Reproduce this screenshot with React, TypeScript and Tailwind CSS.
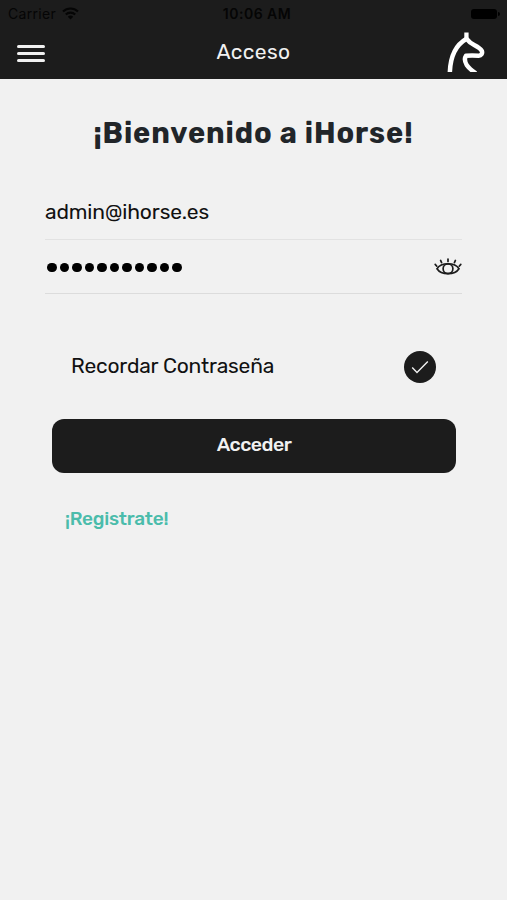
import React, { useState } from 'react';

const PASSWORD_LENGTH = 11;

function WifiIcon() {
  return (
    <svg width="17" height="13" viewBox="0 0 17 13" fill="none" stroke="#050505" strokeWidth="2.1">
      <path d="M1 4.6a10.6 10.6 0 0 1 15 0" />
      <path d="M3.8 7.6a6.6 6.6 0 0 1 9.4 0" />
      <path d="M8.5 12.6 5.8 9.8a3.8 3.8 0 0 1 5.4 0z" fill="#050505" stroke="none" />
    </svg>
  );
}

function HorseLogo() {
  return (
    <svg width="40" height="42" viewBox="0 0 40 42" fill="none" stroke="#fff" strokeWidth="4.5" strokeLinejoin="round">
      <path d="M3.8 44C4 28 8.6 15.6 20.6 8.8c2.4 3.2 4.8 4.8 8 6.4 3.4 1.7 5.6 2.9 7.2 5.6 1 2.8-.6 5-3.2 4.9-4.4-.3-8.5-.3-12.6 0-1.7 2.6-1.1 6.2.7 9.2 2.2 3.2 4.9 5.4 9 8.4" />
      <path d="M18.3 2.4h4.3v5.4l-2 1.8-2.3-1.4z" fill="#fff" stroke="none" />
    </svg>
  );
}

function EyeIcon() {
  return (
    <svg width="28" height="18" viewBox="0 0 28 18" fill="none" stroke="#1c1c1c" strokeWidth="1.7" strokeLinecap="round">
      <path d="M3 10.7C7.2 4.1 20.8 4.1 25 10.7 20.8 17.3 7.2 17.3 3 10.7z" />
      <circle cx="14" cy="10.7" r="4.9" />
      <path d="M1.2 6.4 2.8 8.2M6.6 2.4l1 2.2M14 1v2.4M21.4 2.4l-1 2.2M26.8 6.4l-1.6 1.8" />
    </svg>
  );
}

export default function App() {
  const [email, setEmail] = useState('admin@ihorse.es');
  const [remember, setRemember] = useState(true);

  return (
    <div className="h-[900px] w-[507px] overflow-hidden bg-[#f1f1f1] font-[Rubik,Roboto,sans-serif] text-[#1c1c1c]">
      {/* Header */}
      <header className="h-[79px] bg-[#1c1c1c]">
        <div className="grid h-[27px] grid-cols-3 items-center pl-2 pr-[7px] text-[#050505]">
          <div className="flex items-center gap-[6px] font-[Inter,sans-serif] text-[14px] tracking-[0.3px]">
            <span>Carrier</span>
            <WifiIcon />
          </div>
          <span className="pl-[6px] text-center font-[Inter,sans-serif] text-[14px] font-semibold tracking-[0.5px] whitespace-nowrap">10:06 AM</span>
          <div className="flex items-center justify-end gap-px">
            <div className="h-[10px] w-[26px] rounded-[3px] bg-black" />
            <div className="h-1 w-[2px] rounded-r bg-black" />
          </div>
        </div>
        <div className="grid h-[52px] grid-cols-3 items-center pl-[17px] pr-[21px]">
          <button type="button" aria-label="Menu" className="flex w-7 flex-col gap-[4px]">
            <span className="h-[3px] rounded-full bg-[#f1f1f1]" />
            <span className="h-[3px] rounded-full bg-[#f1f1f1]" />
            <span className="h-[3px] rounded-full bg-[#f1f1f1]" />
          </button>
          <h1 className="pb-0.5 pl-1 text-center text-[21px] tracking-[0.4px] text-[#f1f1f1]">Acceso</h1>
          <div className="flex justify-end pb-1">
            <HorseLogo />
          </div>
        </div>
      </header>

      {/* Login form */}
      <main className="px-[45px] pt-[34px]">
        <h2 className="text-center text-[29px] leading-10 font-bold tracking-[0.9px] whitespace-nowrap text-[#212529]">
          ¡Bienvenido a iHorse!
        </h2>

        <form className="mt-8" onSubmit={(e) => e.preventDefault()}>
          <div className="flex h-[55px] items-center border-b border-[#e2e2e2]">
            <input
              className="w-full bg-transparent text-[21px] tracking-[-0.13px] text-[#111] outline-none"
              value={email}
              onChange={(e) => setEmail(e.target.value)}
            />
          </div>
          <div className="flex h-[54px] items-center justify-between border-b border-[#dcdcdc] pt-px pl-[2px]">
            <div className="flex gap-[3px] pt-px">
              {Array.from({ length: PASSWORD_LENGTH }, (_, i) => (
                <span key={i} className="h-[9.5px] w-[9.5px] rounded-full bg-black" />
              ))}
            </div>
            <EyeIcon />
          </div>

          {/* Remember password */}
          <div className="mt-[57px] flex h-8 items-center justify-between pr-[26px] pl-[26px]">
            <span className="pb-0.5 text-[21px] tracking-[-0.18px] text-[#111]">Recordar Contraseña</span>
            <button
              type="button"
              aria-label="Recordar"
              onClick={() => setRemember(!remember)}
              className="flex h-8 w-8 items-center justify-center rounded-full bg-[#1c1c1c]"
            >
              {remember && (
                <svg width="18" height="14" viewBox="0 0 18 14" fill="none" stroke="#f1f1f1" strokeWidth="1.4">
                  <path d="M1.2 7.5 6 12.4 16.8 1.4" />
                </svg>
              )}
            </button>
          </div>

          <button
            type="submit"
            className="mt-9 ml-[7px] flex h-[54px] w-[404px] items-center justify-center rounded-xl bg-[#1c1c1c] pb-0.5 text-[19.5px] font-medium tracking-[-0.5px] text-[#f1f1f1]"
          >
            Acceder
          </button>
        </form>

        <a className="mt-[31px] ml-5 block text-[19px] leading-[30px] font-medium tracking-[-0.25px] text-[#4bbcab]" href="#registro">
          ¡Registrate!
        </a>
      </main>
    </div>
  );
}
